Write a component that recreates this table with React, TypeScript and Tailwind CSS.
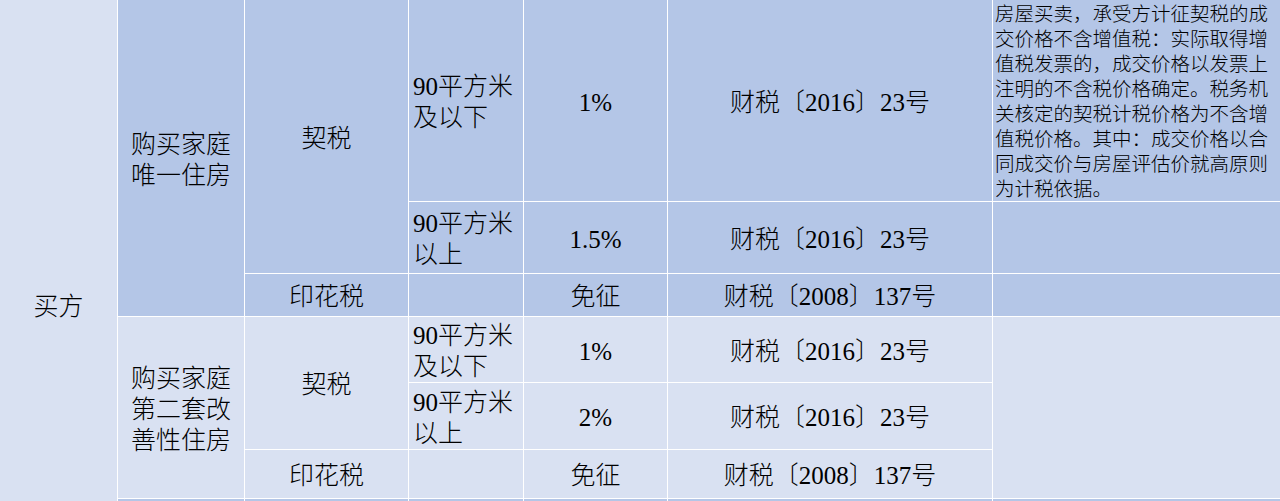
import React from "react";

const FONT = { fontFamily: '"Liberation Serif", "Noto Sans CJK SC", serif' };

const up = "bg-[#b4c6e7]";
const low = "bg-[#d9e1f2]";

function C({ className = "", children }: { className?: string; children?: React.ReactNode }) {
  return <div className={`flex items-center justify-center text-center pt-[3px] ${className}`}>{children}</div>;
}

function L({ className = "", children }: { className?: string; children?: React.ReactNode }) {
  return <div className={`flex items-center pl-1 pt-[3px] text-left leading-[31px] ${className}`}>{children}</div>;
}

export default function App() {
  return (
    <div className="w-[1280px] h-[501px] overflow-hidden bg-white text-black font-light" style={FONT}>
      <div className="grid gap-px bg-white text-[25px] leading-[31px] grid-cols-[117px_126px_163px_114px_143px_324px_287px] grid-rows-[201px_71px_42px_65px_66px_48px_111px]">
        {/* column 1 */}
        <C className={`${low} col-start-1 row-start-1 row-span-7`}>买方</C>

        {/* upper block */}
        <C className={`${up} col-start-2 row-start-1 row-span-3 px-2`}>
          <span className="block w-[100px]">购买家庭唯一住房</span>
        </C>
        <C className={`${up} col-start-3 row-start-1 row-span-2`}>契税</C>
        <L className={`${up} col-start-4 row-start-1`}>
          <span className="block w-[104px]">90平方米及以下</span>
        </L>
        <C className={`${up} col-start-5 row-start-1`}>1%</C>
        <C className={`${up} col-start-6 row-start-1`}>财税〔2016〕23号</C>
        <div className={`${up} col-start-7 row-start-1 pl-[2px] pt-[2px] text-[19.5px] leading-[25px] text-left`}>
          房屋买卖，承受方计征契税的成交价格不含增值税：实际取得增值税发票的，成交价格以发票上注明的不含税价格确定。税务机关核定的契税计税价格为不含增值税价格。其中：成交价格以合同成交价与房屋评估价就高原则为计税依据。
        </div>

        <L className={`${up} col-start-4 row-start-2`}>
          <span className="block w-[104px]">90平方米以上</span>
        </L>
        <C className={`${up} col-start-5 row-start-2`}>1.5%</C>
        <C className={`${up} col-start-6 row-start-2`}>财税〔2016〕23号</C>
        <div className={`${up} col-start-7 row-start-2`} />

        <C className={`${up} col-start-3 row-start-3`}>印花税</C>
        <div className={`${up} col-start-4 row-start-3`} />
        <C className={`${up} col-start-5 row-start-3`}>免征</C>
        <C className={`${up} col-start-6 row-start-3`}>财税〔2008〕137号</C>
        <div className={`${up} col-start-7 row-start-3`} />

        {/* lower block */}
        <C className={`${low} col-start-2 row-start-4 row-span-3 px-2`}>
          <span className="block w-[100px]">购买家庭第二套改善性住房</span>
        </C>
        <C className={`${low} col-start-3 row-start-4 row-span-2`}>契税</C>
        <L className={`${low} col-start-4 row-start-4`}>
          <span className="block w-[104px]">90平方米及以下</span>
        </L>
        <C className={`${low} col-start-5 row-start-4`}>1%</C>
        <C className={`${low} col-start-6 row-start-4`}>财税〔2016〕23号</C>
        <div className={`${low} col-start-7 row-start-4 row-span-3`} />

        <L className={`${low} col-start-4 row-start-5`}>
          <span className="block w-[104px]">90平方米以上</span>
        </L>
        <C className={`${low} col-start-5 row-start-5`}>2%</C>
        <C className={`${low} col-start-6 row-start-5`}>财税〔2016〕23号</C>

        <C className={`${low} col-start-3 row-start-6`}>印花税</C>
        <div className={`${low} col-start-4 row-start-6`} />
        <C className={`${low} col-start-5 row-start-6`}>免征</C>
        <C className={`${low} col-start-6 row-start-6`}>财税〔2008〕137号</C>

        {/* next row (cut off) */}
        <div className={`${up} col-start-2 row-start-7`} />
        <div className={`${up} col-start-3 row-start-7`} />
        <div className={`${up} col-start-4 row-start-7`} />
        <div className={`${up} col-start-5 row-start-7`} />
        <div className={`${up} col-start-6 row-start-7`} />
        <div className={`${up} col-start-7 row-start-7`} />
      </div>
    </div>
  );
}
